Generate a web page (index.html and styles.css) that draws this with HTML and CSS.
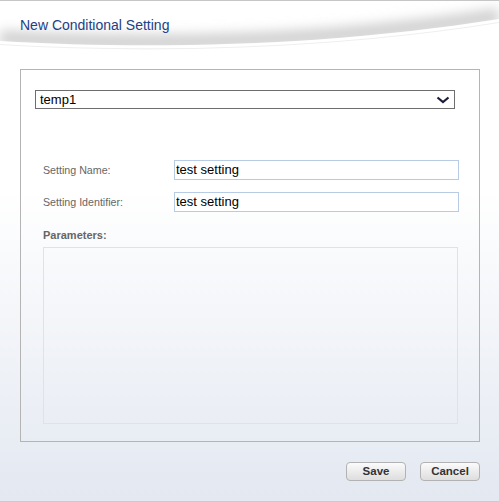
FILE: index.html
```html
<!DOCTYPE html>
<html>
<head>
<meta charset="utf-8">
<link rel="stylesheet" href="styles.css">
</head>
<body>
<div class="dialog">
  <div class="header">
    <svg class="swoosh" width="499" height="68" viewBox="0 0 499 68">
      <defs>
        <clipPath id="above">
          <path d="M0,0 L0,40 C150,49 330,45 499,18 L499,0 Z"/>
        </clipPath>
        <filter id="blur" x="-10%" y="-100%" width="120%" height="300%">
          <feGaussianBlur stdDeviation="6"/>
        </filter>
      </defs>
      <g clip-path="url(#above)">
        <path d="M0,37 C150,46 330,42 499,15" fill="none" stroke="#d2d2d2" stroke-width="16" filter="url(#blur)"/>
      </g>
      <path d="M0,43.5 C150,52.5 330,48.5 499,21.5" fill="none" stroke="#efefef" stroke-width="1.2"/>
    </svg>
    <h1 class="title">New Conditional Setting</h1>
  </div>
  <div class="panel">
    <div class="select">
      <span class="select-text">temp1</span>
      <svg class="chevron" width="14" height="8" viewBox="0 0 14 8">
        <polyline points="1.5,1.5 7,6 12.5,1.5" fill="none" stroke="#1c1c38" stroke-width="2.2"/>
      </svg>
    </div>
    <div class="fields">
      <div class="row">
        <label class="label">Setting Name:</label>
        <input class="text-input" type="text" value="test setting">
      </div>
      <div class="row">
        <label class="label">Setting Identifier:</label>
        <input class="text-input" type="text" value="test setting">
      </div>
    </div>
    <div class="params-label">Parameters:</div>
    <div class="params-box"></div>
  </div>
  <div class="actions">
    <button class="btn">Save</button>
    <button class="btn">Cancel</button>
  </div>
</div>
</body>
</html>
```

FILE: styles.css
```css
* { box-sizing: border-box; }
html, body { margin: 0; padding: 0; }
body {
  font-family: "Liberation Sans", Arial, sans-serif;
  background: #fff;
}
.dialog {
  width: 499px;
  height: 502px;
  border-top: 1px solid #c6c6c6;
  border-bottom: 1px solid #c8ccd2;
  background: linear-gradient(to bottom, #ffffff 0%, #ffffff 38%, #e3e8f1 100%);
}
.header {
  position: relative;
  height: 68px;
  padding: 16px 0 0 20px;
}
.swoosh {
  position: absolute;
  left: 0;
  top: 0;
}
.title {
  position: relative;
  margin: 0;
  font-size: 14px;
  line-height: 16px;
  font-weight: normal;
  color: #233f86;
}
.panel {
  margin-left: 20px;
  width: 460px;
  height: 373px;
  border: 1px solid #b4b4b4;
  padding: 20px 0 0 14px;
}
.select {
  width: 420px;
  height: 19px;
  border: 1px solid #6e6e6e;
  background: #fff;
  display: flex;
  align-items: center;
  justify-content: space-between;
  padding: 0 4px 0 4px;
}
.select-text {
  font-size: 13px;
  line-height: 17px;
  color: #000;
}
.chevron { display: block; margin-top: 1px; }
.fields {
  margin-top: 51px;
  padding-left: 8px;
  display: flex;
  flex-direction: column;
  gap: 12px;
}
.row {
  display: flex;
  align-items: center;
  height: 20px;
}
.label {
  width: 131px;
  font-size: 10.67px;
  line-height: 20px;
  color: #666;
}
.text-input {
  width: 285px;
  height: 20px;
  border: 1px solid #b7cce4;
  padding: 0 1px 2px 1px;
  margin: 0;
  font-family: "Liberation Sans", Arial, sans-serif;
  font-size: 13px;
  color: #000;
  background: #fff;
  outline: none;
}
.params-label {
  margin-top: 17px;
  padding-left: 8px;
  font-size: 11px;
  line-height: 13px;
  font-weight: bold;
  color: #666;
}
.params-box {
  margin-top: 5px;
  margin-left: 8px;
  width: 415px;
  height: 177px;
  border: 1px solid #e2e2e2;
}
.actions {
  display: flex;
  justify-content: flex-end;
  gap: 14px;
  padding: 20px 19px 0 0;
}
.btn {
  width: 60px;
  height: 19px;
  margin: 0;
  padding: 0;
  border: 1px solid #b2b2b2;
  border-radius: 4px;
  background: linear-gradient(to bottom, #fbfbfb 0%, #ececec 50%, #dedede 100%);
  font-family: "Liberation Sans", Arial, sans-serif;
  font-size: 11.5px;
  font-weight: bold;
  color: #333;
  line-height: 17px;
}
```
